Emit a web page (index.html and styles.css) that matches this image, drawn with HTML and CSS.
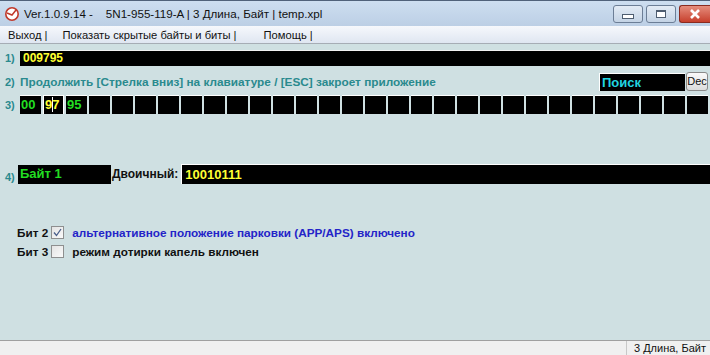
FILE: index.html
```html
<!DOCTYPE html>
<html lang="ru">
<head>
<meta charset="UTF-8" />
<title>Ver.1.0.9.14</title>
<link rel="stylesheet" href="styles.css">
</head>
<body>
<div class="window">
    <div class="titlebar">
        <svg class="app-icon" width="16" height="16" viewBox="0 0 16 16">
            <circle cx="8" cy="8" r="6.2" fill="#fff" stroke="#c0392b" stroke-width="1.6"/>
            <path d="M3 7 L8 9 L12 4" fill="none" stroke="#c0392b" stroke-width="1.5"/>
        </svg>
        <span class="title">Ver.1.0.9.14 -&nbsp;&nbsp;&nbsp; 5N1-955-119-A | 3 Длина, Байт | temp.xpl</span>
        <div class="win-btns">
            <div class="wbtn"><span class="ico-min"></span></div>
            <div class="wbtn"><span class="ico-max"></span></div>
            <div class="wbtn close">
                <svg width="14" height="10" viewBox="0 0 14 10"><path d="M3 1 L11 9 M11 1 L3 9" stroke="#fff" stroke-width="2.6"/></svg>
            </div>
        </div>
    </div>

    <div class="menubar">
        <span class="menu-item">Выход |</span>
        <span class="menu-item">Показать скрытые байты и биты |</span>
        <span class="menu-item help">Помощь |</span>
    </div>

    <div class="content">
        <div class="row row1">
            <span class="num">1)</span>
            <div class="field hex">009795</div>
        </div>

        <div class="row row2">
            <span class="num">2)</span>
            <span class="hint">Продолжить [Стрелка вниз] на клавиатуре / [ESC] закроет приложение</span>
            <div class="search">Поиск</div>
            <div class="dec-btn">Dec</div>
        </div>

        <div class="row row3">
            <span class="num">3)</span>
            <div class="bytes" id="bytes"></div>
        </div>

        <div class="row row4">
            <span class="num low">4)</span>
            <div class="byte-name">Байт 1</div>
            <span class="bin-label">Двоичный:</span>
            <div class="bin-field">10010111</div>
        </div>

        <div class="bits">
            <div class="bit">
                <span class="bit-label">Бит 2</span>
                <span class="check checked">
                    <svg width="9" height="9" viewBox="0 0 9 9"><path d="M1 4.5 L3.5 7.5 L8 1" fill="none" stroke="#4a5f8a" stroke-width="1.3"/></svg>
                </span>
                <span class="bit-text on">альтернативное положение парковки (APP/APS) включено</span>
            </div>
            <div class="bit">
                <span class="bit-label">Бит 3</span>
                <span class="check"></span>
                <span class="bit-text">режим дотирки капель включен</span>
            </div>
        </div>
    </div>

    <div class="statusbar">
        <span class="status-cell">3 Длина, Байт</span>
    </div>
</div>

<script>
    // 30 ячеек байтов, первые три заполнены
    var values = ['00', '97', '95'];
    var bytes = document.getElementById('bytes');
    for (var i = 0; i < 30; i++) {
        var cell = document.createElement('div');
        cell.className = 'byte';
        if (i === 1) {
            // активная ячейка с курсором
            cell.className += ' active';
            cell.innerHTML = '9<span class="caret"></span>7';
        } else {
            cell.textContent = values[i] || '';
        }
        bytes.appendChild(cell);
    }
</script>
</body>
</html>
```

FILE: styles.css
```css
body {
    margin: 0;
    font-family: "Liberation Sans", Arial, sans-serif;
    font-size: 12px;
    background: #cfe0e2;
}
.window {
    width: 710px;
    height: 355px;
    display: flex;
    flex-direction: column;
    overflow: hidden;
}

/* Заголовок окна */
.titlebar {
    height: 26px;
    flex: none;
    display: flex;
    align-items: center;
    border-top: 1px solid #50627a;
    box-sizing: border-box;
    background: linear-gradient(#cddef0, #bccfe5);
    padding-left: 4px;
}
.app-icon {
    flex: none;
}
.title {
    margin-left: 4px;
    font-size: 11.6px;
    color: #111;
    white-space: pre;
}
.win-btns {
    margin-left: auto;
    display: flex;
    gap: 3px;
    align-self: flex-start;
    margin-top: 4px;
}
.wbtn {
    width: 28px;
    height: 16px;
    border: 1px solid #6c7e96;
    border-radius: 3px;
    background: linear-gradient(#e3ebf5, #c4d3e5);
    display: flex;
    align-items: center;
    justify-content: center;
    box-sizing: content-box;
}
.wbtn.close {
    width: 30px;
    border-color: #8a2b20;
    border-right: none;
    border-radius: 3px 0 0 3px;
    background: linear-gradient(#e58d7d, #c7402d);
}
.ico-min {
    width: 10px;
    height: 3px;
    margin-top: 5px;
    border: 1px solid #4e5d70;
    background: #fff;
}
.ico-max {
    width: 8px;
    height: 5px;
    border: 1px solid #4e5d70;
    border-top-width: 2px;
    background: #fff;
}

/* Меню */
.menubar {
    height: 18px;
    flex: none;
    display: flex;
    align-items: center;
    box-sizing: border-box;
    padding-left: 8px;
    gap: 15px;
    background: linear-gradient(#f6f8fc, #dfe6f1);
    border-bottom: 1px solid #a6adb5;
    font-size: 11.2px;
    color: #111;
}
.menu-item.help {
    margin-left: 12px;
}

/* Рабочая область */
.content {
    flex: 1;
    padding: 6px 0 0 5px;
}
.row {
    display: flex;
    align-items: center;
}
.num {
    width: 15px;
    flex: none;
    color: #2a8a8e;
    font-weight: bold;
    font-size: 11px;
}
.row1 {
    height: 16px;
}
.field {
    flex: 1;
    height: 16px;
    background: #000;
    border-top: 1px solid #f2f2f2;
    box-sizing: border-box;
    color: #ffff33;
    font-weight: bold;
    line-height: 15px;
    padding-left: 3px;
}
.row2 {
    margin-top: 6px;
    height: 19px;
}
.hint {
    color: #2a8a8e;
    font-weight: bold;
    font-size: 11.8px;
}
.search {
    margin-left: auto;
    width: 86px;
    height: 18px;
    box-sizing: border-box;
    background: #000;
    border-top: 1px solid #fff;
    border-left: 1px solid #fff;
    color: #22d6e0;
    font-weight: bold;
    font-size: 13px;
    line-height: 17px;
    padding-left: 2px;
}
.dec-btn {
    width: 22px;
    height: 19px;
    margin: 0 2px 0 1px;
    box-sizing: border-box;
    border: 1px solid #8a8a8a;
    border-radius: 3px;
    background: linear-gradient(#fafafa, #dcdcdc);
    font-size: 11px;
    line-height: 17px;
    text-align: center;
    color: #111;
}
.row3 {
    margin-top: 4px;
}
.bytes {
    display: flex;
    gap: 2px;
}
.byte {
    width: 21px;
    height: 19px;
    box-sizing: border-box;
    background: #000;
    border-top: 1px solid #fff;
    color: #22dd22;
    font-weight: bold;
    font-size: 13px;
    line-height: 18px;
    padding-left: 1px;
}
.byte.active {
    color: #ffff33;
    border-left: 1px solid #fff;
    border-right: 1px solid #fff;
}
.caret {
    display: inline-block;
    width: 1px;
    height: 15px;
    margin: 0 -1px 0 0;
    background: #fff;
    vertical-align: -3px;
}
.row4 {
    margin-top: 50px;
    height: 20px;
}
.num.low {
    align-self: flex-end;
    padding-bottom: 1px;
}
.byte-name {
    width: 93px;
    height: 19px;
    margin-left: -2px;
    background: #000;
    color: #22dd22;
    font-weight: bold;
    font-size: 13px;
    line-height: 18px;
    padding-left: 2px;
    box-sizing: border-box;
}
.bin-label {
    margin-left: 1px;
    font-weight: bold;
    color: #111;
}
.bin-field {
    flex: 1;
    margin-left: 3px;
    height: 20px;
    box-sizing: border-box;
    background: #000;
    border-top: 1px solid #fff;
    border-left: 1px solid #fff;
    color: #ffff33;
    font-weight: bold;
    font-size: 13px;
    line-height: 19px;
    padding-left: 3px;
}

/* Биты */
.bits {
    margin-top: 41px;
    padding-left: 12px;
    display: flex;
    flex-direction: column;
    gap: 5px;
    font-size: 11.75px;
}
.bit {
    display: flex;
    align-items: center;
    height: 14px;
}
.bit-label {
    font-weight: bold;
    color: #111;
}
.check {
    width: 11px;
    height: 11px;
    margin-left: 3px;
    border: 1px solid #8e8f8f;
    background: linear-gradient(135deg, #e4e4e4, #fafafa);
    display: flex;
    align-items: center;
    justify-content: center;
}
.bit-text {
    margin-left: 8px;
    font-weight: bold;
    color: #111;
}
.bit-text.on {
    color: #2424c8;
}

/* Строка состояния */
.statusbar {
    height: 15px;
    flex: none;
    display: flex;
    justify-content: flex-end;
    border-top: 1px solid #a0a0a0;
    background: #f0f0f0;
    box-sizing: border-box;
}
.status-cell {
    border-left: 1px solid #c8c8c8;
    padding: 0 4px 0 7px;
    font-size: 11px;
    line-height: 14px;
    color: #111;
}
```
